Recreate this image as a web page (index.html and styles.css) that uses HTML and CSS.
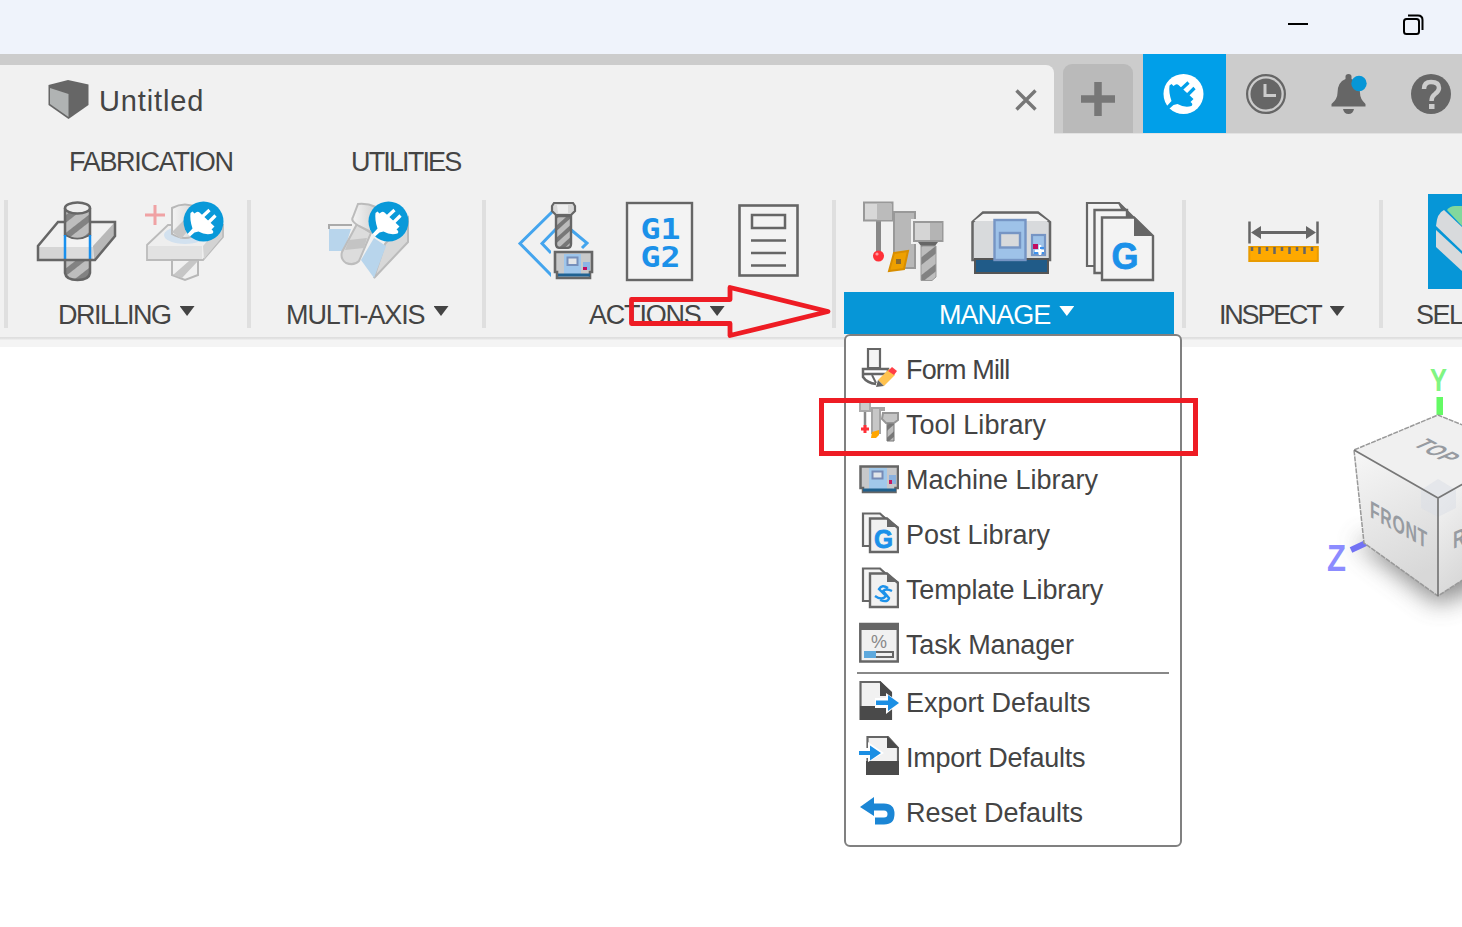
FILE: index.html
```html
<!DOCTYPE html>
<html lang="en">
<head>
<meta charset="utf-8">
<title>Untitled</title>
<link rel="stylesheet" href="styles.css">
</head>
<body>
<svg class="defs" aria-hidden="true">
  <defs>
    <linearGradient id="pale" x1="0" x2="1" y1="0" y2="0"><stop offset="0" stop-color="#f4f4f4"/><stop offset="1" stop-color="#d2d2d2"/></linearGradient>
    <linearGradient id="face" x1="0" x2=".3" y1="0" y2="1"><stop offset="0" stop-color="#f7f7f7"/><stop offset="1" stop-color="#d8d8d8"/></linearGradient>
    <pattern id="flute" width="20" height="14" patternUnits="userSpaceOnUse" patternTransform="rotate(-38)"><rect width="20" height="14" fill="#bdbdbd"/><rect width="20" height="6" fill="#828282"/></pattern>
    <pattern id="flute-s" width="12" height="9" patternUnits="userSpaceOnUse" patternTransform="rotate(-42)"><rect width="12" height="9" fill="#bcbcbc"/><rect width="12" height="4" fill="#777"/></pattern>
    <filter id="soft" x="-50%" y="-50%" width="200%" height="200%"><feGaussianBlur stdDeviation="12"/></filter>
    <g id="plug">
      <path d="M-13-8.500-11-10-9-8Q-6-11-4-9L11 5 8 8Q11 10 9 12 2 14-5 10L-9 11-13.500 15-16 12.500-11 7Q-14-2-13-8.500Z" stroke="none"/>
      <path d="M-1-5 6-11.500M5 1 12-6" fill="none" stroke-width="3.200"/>
    </g>
  </defs>
</svg>

<div class="window">
  <header class="titlebar">
    <svg class="win-btn" width="20" height="20" viewBox="0 0 20 20"><path d="M0 10H20" stroke="#000" stroke-width="2"/></svg>
    <svg class="win-btn" width="21" height="21" viewBox="0 0 21 21" fill="none" stroke="#000" stroke-width="2"><rect x="1" y="5" width="15" height="15" rx="2.500"/><path d="M5 1.500H15Q19.500 1.500 19.500 6V16"/></svg>
  </header>

  <div class="tabbar">
    <div class="doc-tab">
      <svg class="doc-icon" width="42" height="42" viewBox="47 78 42 42"><path d="M48.500 84 68 79 88.500 83.500V104L68.500 118 48.500 104Z" fill="#666"/><path d="M50 87 68.500 93V116L50 103Z" fill="#b0b3b3"/></svg>
      <span class="doc-name">Untitled</span>
      <svg width="22" height="22" viewBox="0 0 22 22"><path d="M1.500 1.500 20.500 20.500M20.500 1.500 1.500 20.500" stroke="#777" stroke-width="3.400"/></svg>
    </div>
    <div class="new-tab"><svg width="34" height="34" viewBox="0 0 34 34"><path d="M0 17H34M17 0V34" stroke="#777" stroke-width="7.500"/></svg></div>
    <div class="extension">
      <svg width="83" height="79" viewBox="1143 54 83 79"><circle cx="1183.500" cy="94" r="20" fill="#fff"/><use href="#plug" x="1182.500" y="94" fill="#009fe9" stroke="#009fe9"/></svg>
    </div>
    <svg class="status" width="236" height="79" viewBox="1226 54 236 79">
      <circle cx="1266" cy="94" r="18.900" fill="none" stroke="#666" stroke-width="2.200"/><circle cx="1266" cy="94" r="15.500" fill="#666"/><path d="M1265 84V95.500H1276" fill="none" stroke="#ccc" stroke-width="3"/>
      <path d="M1345.500 76.500Q1345.500 74 1348.500 74T1351.500 76.500V79Q1360 82 1360 93 1360 99 1365.500 104V106.500H1331.500V104Q1337.500 99 1337.500 93 1337.500 82 1345.500 79ZM1343 109H1354Q1353 114 1348.500 114T1343 109Z" fill="#666"/><circle cx="1359" cy="83.500" r="7.700" fill="#0696d7"/>
      <circle cx="1431" cy="94" r="20" fill="#666"/><path d="M1424 89Q1424 82 1431 82 1439 82 1439 88 1439 91 1435 94 1431.500 96.500 1431.500 101" fill="none" stroke="#ccc" stroke-width="4.500"/><rect x="1429" y="104" width="5.500" height="5" fill="#ccc"/>
    </svg>
  </div>

  <nav class="ribbon-tabs"><span class="tab-fabrication">FABRICATION</span><span class="tab-utilities">UTILITIES</span></nav>

  <main class="ribbon">
    <section class="group drilling">
      <div class="tools">
        <svg width="190" height="94" viewBox="36 194 190 94">
          <path d="M58 222H115V236L95 260H38V246Z" fill="#f0f0f0"/><path d="M39 247H93V259H39Z" fill="#d5d5d5"/><path d="M93 246 114 223V236L94 260Z" fill="#b8b8b8"/><path d="M58 222H115V236L95 260H38V246Z" fill="none" stroke="#666" stroke-width="2.500"/>
          <path d="M65 208V235Q77 243 90 235V208" fill="url(#flute)" stroke="#666" stroke-width="2.500"/><ellipse cx="77.500" cy="208" rx="12.500" ry="5.500" fill="#eee" stroke="#666" stroke-width="2.500"/><path d="M65 236V258H90V236Q77 243 65 236Z" fill="#f3f3f3"/><path d="M65 247H90V259H65Z" fill="#dcdcdc"/><path d="M65 235V259M90 235V259" stroke="#1890ee" stroke-width="2.500"/>
          <path d="M65 260V273Q66 280 77.500 280T90 273V260Z" fill="url(#flute)" stroke="#666" stroke-width="2.500"/>
          <path d="M155 205V225M145 215H165" stroke="#f0a2a4" stroke-width="3"/>
          <path d="M168 225H223V237L203 260H147V245Z" fill="#eee" stroke="#bbb" stroke-width="1.800"/><path d="M148 246H202V259H148Z" fill="#e2e2e2"/><path d="M203 246 222 224V237L204 259Z" fill="#d3d3d3"/><ellipse cx="185" cy="235" rx="21" ry="9" fill="#d2e1ef"/>
          <path d="M172 208Q185 201 198 208V234Q185 242 172 234Z" fill="url(#pale)" stroke="#b8b8b8" stroke-width="2"/><path d="M172 232 196 208V221L181 239Z" fill="#c6c6c6"/>
          <path d="M172 260H198V275L185 280 172 275Z" fill="#f0f0f0" stroke="#b8b8b8" stroke-width="2"/><path d="M173 275 189 261H198L182 278Z" fill="#c6c6c6"/>
          <circle cx="203.500" cy="221.500" r="20" fill="#0999d9"/><use href="#plug" x="203.500" y="221.500" fill="#fff" stroke="#fff"/>
        </svg>
      </div>
      <div class="label">DRILLING<i></i></div>
    </section>
    <section class="group multi-axis">
      <div class="tools">
        <svg width="84" height="94" viewBox="327 194 84 94">
          <path d="M329 229V225H352" fill="none" stroke="#aaa" stroke-width="2"/><path d="M329 229H351L344 251H329Z" fill="#b8d5ec"/><path d="M385 244 408 218V242L374 278Z" fill="#d8d8d8" stroke="#bbb" stroke-width="2"/><path d="M374 238 386 246 374 278 361 260Z" fill="#b8d5ec"/>
          <path d="M357 224 371 233 359 261Q354 266 346 263 340 259 342 252Z" fill="#dcdcdc" stroke="#bdbdbd" stroke-width="2"/><path d="M349 240 367 238 364 248 345 250Z" fill="#c4c4c4"/><path d="M358 204Q367 203 376 207L373 233 359 226Q350 221 353 217Z" fill="url(#pale)" stroke="#bbb" stroke-width="2"/>
          <circle cx="388.500" cy="221.500" r="20" fill="#0999d9"/><use href="#plug" x="388.500" y="221.500" fill="#fff" stroke="#fff"/>
        </svg>
      </div>
      <div class="label">MULTI-AXIS<i></i></div>
    </section>
    <section class="group actions">
      <div class="tools">
        <svg width="284" height="94" viewBox="516 194 284 94">
          <path d="M553 211 520 243.500 553 277M556 229 542 243.500 551 253M570 229 587 243 582 248" fill="none" stroke="#44a5ee" stroke-width="3"/>
          <path d="M556 216H571V244Q571 248 567 248H560Q556 248 556 244Z" fill="url(#flute-s)" stroke="#666" stroke-width="2.400"/><path d="M554 203H573L575 206V211L571 215H556L552 211V206Z" fill="#d8d8d8" stroke="#666" stroke-width="2.200"/><path d="M557 205H568V213H558Z" fill="#eee"/>
          <rect x="551" y="249" width="45" height="31" fill="#f1f1f1"/><path d="M555 252H592V272H590V278H557V272H555Z" fill="#c8c9ca" stroke="#666" stroke-width="2.600"/><rect x="564" y="254" width="17" height="20" fill="#9fc6eb"/><rect x="567.500" y="257.500" width="10" height="7.500" fill="#e4e6e8" stroke="#7790bb" stroke-width="2"/><rect x="558" y="273.500" width="32" height="3" fill="#206292"/><rect x="583" y="262" width="7" height="8" fill="#8cb4e5"/><rect x="583" y="267" width="4" height="3" fill="#c00b60"/>
          <rect x="627" y="203" width="65" height="77" fill="#f3f3f3" stroke="#666" stroke-width="2.400"/><text x="660.500" y="239" class="code" textLength="40" lengthAdjust="spacingAndGlyphs">G1</text><text x="660.500" y="266.500" class="code" textLength="40" lengthAdjust="spacingAndGlyphs">G2</text>
          <rect x="739.500" y="205.500" width="58" height="70" fill="#f3f3f3" stroke="#666" stroke-width="2.600"/><path d="M752 215H785V228H752ZM751 240.500H786M751 253H786M751 265.500H786" fill="none" stroke="#666" stroke-width="2.500"/>
        </svg>
      </div>
      <div class="label">ACTIONS<i></i></div>
    </section>
    <section class="group manage">
      <div class="tools">
        <svg width="294" height="94" viewBox="862 194 294 94">
          <path d="M876 220H881V253H876Z" fill="#888"/><rect x="864" y="202.500" width="28.500" height="18" fill="#d8d8d8" stroke="#999" stroke-width="2"/><rect x="877" y="204" width="15" height="16" fill="#bbb"/><circle cx="878.500" cy="256" r="5.500" fill="#ff3038"/><circle cx="877" cy="254" r="1.600" fill="#ff999c"/>
          <path d="M894 212H915V268H894Z" fill="#b8b8b8" stroke="#999" stroke-width="2"/><rect x="911" y="219" width="34" height="25" fill="#f1f1f1"/>
          <path d="M894 253 908 251 904 269 889 271Z" fill="#eea000" stroke="#d88e00" stroke-width="2"/><rect x="896" y="259" width="5" height="5" fill="#8a6a30"/>
          <rect x="914" y="222" width="28.500" height="19" fill="#d5d5d5" stroke="#999" stroke-width="2"/><rect x="930" y="223" width="12" height="17" fill="#b4b4b4"/><path d="M918 242H938L935 246H921Z" fill="#666"/><path d="M921 246H936V277L932 280.500H921Z" fill="url(#flute)" stroke="#999"/>
          <path d="M983 212.500H1038L1050 222V260H972.500V222Z" fill="#d8dadc" stroke="#666" stroke-width="2.500"/><path d="M983 214H1038L1048 221H974Z" fill="#f3f3f3"/><rect x="975" y="259" width="73" height="14" fill="#205b88" stroke="#555" stroke-width="2"/><rect x="994.500" y="220" width="31" height="40" fill="#9ec2e8" stroke="#7695c4" stroke-width="2.400"/><rect x="1000" y="233" width="20" height="14.500" fill="#d8dadc" stroke="#7695c4" stroke-width="2.400"/><rect x="1032" y="235" width="13" height="20" fill="#9ec2e8" stroke="#7695c4" stroke-width="2.200"/><path d="M1035 251H1044M1040 245V255" stroke="#fff" stroke-width="2.500"/><rect x="1033" y="244" width="5" height="5" fill="#c20b60"/><path d="M1040 248H1044M1034 253H1038M1042 253H1044" stroke="#3c91ee" stroke-width="2"/>
          <path d="M1087 203H1119L1138 222V266H1087Z" fill="#f3f3f3" stroke="#666" stroke-width="2.200"/><path d="M1118 203 1152 236H1134Z" fill="#666"/><path d="M1094.500 210H1127V273H1094.500Z" fill="#f3f3f3" stroke="#666" stroke-width="2.400"/><path d="M1102 217.500H1134L1153 236V280H1102Z" fill="#f3f3f3" stroke="#666" stroke-width="2.400"/><path d="M1119 202 1134 217V236H1153Z" fill="#666"/><text x="1125" y="268.500" class="gee" font-size="36" textLength="27" lengthAdjust="spacingAndGlyphs">G</text>
        </svg>
      </div>
      <div class="label">MANAGE<i></i></div>
    </section>
    <section class="group inspect">
      <div class="tools">
        <svg width="74" height="94" viewBox="1246 194 74 94"><path d="M1249.500 221.500V243.500M1317.500 221.500V243.500" stroke="#666" stroke-width="2.500"/><path d="M1256 232.500H1311" stroke="#666" stroke-width="3"/><path d="M1251 232.500 1261 226V239ZM1316 232.500 1306 226V239Z" fill="#666"/><rect x="1249.300" y="247" width="68.500" height="14" fill="#ffa900" stroke="#e99b00" stroke-width="2"/><path d="M1252 247V251M1259.500 247V254M1267 247V251M1274.500 247V254M1282 247V251M1289.500 247V254M1297 247V251M1304.500 247V254M1312 247V251" stroke="#666" stroke-width="2.500"/></svg>
      </div>
      <div class="label">INSPECT<i></i></div>
    </section>
    <section class="group select">
      <div class="tools">
        <svg width="34" height="95" viewBox="1428 194 34 95"><rect x="1428" y="194" width="34" height="95" fill="#0696d7"/><path d="M1447 210Q1450 206 1455 206H1462V226Z" fill="#82d89c"/><path d="M1436 226Q1437 213 1444 210L1462 227V251Z" fill="#d8dadc"/><path d="M1436 230 1462 254V271L1436 247Z" fill="#d8dadc"/></svg>
      </div>
      <div class="label">SEL</div>
    </section>
  </main>

  <section class="canvas">
    <svg width="150" height="290" viewBox="1312 355 150 290">
      <path d="M1356 542 1438 604 1520 570V540H1362Z" fill="#666" opacity=".75" filter="url(#soft)"/>
      <text x="1430" y="391" font-size="31" fill="#80f582" class="axis" textLength="17" lengthAdjust="spacingAndGlyphs">Y</text><rect x="1436.500" y="397" width="6.500" height="18" fill="#64fa64"/>
      <text x="1327" y="571" font-size="36" fill="#8c8cff" class="axis" textLength="19" lengthAdjust="spacingAndGlyphs">Z</text><path d="M1351 550 1366 543" stroke="#7272f4" stroke-width="6"/>
      <path d="M1354 450 1438 415 1470 428V484L1438 498Z" fill="#f0f0f0"/><path d="M1354 450 1438 498V596L1364 543Z" fill="url(#face)"/><path d="M1438 498 1472 479V574L1438 596Z" fill="url(#face)"/>
      <path d="M1438 479 1456 490V508L1438 517 1421 508V490Z" fill="#d9dee5" opacity=".5"/>
      <path d="M1470 428 1438 415 1354 450 1364 543 1438 596 1472 574" fill="none" stroke="#999" stroke-width="1.500" stroke-dasharray="5 1"/><path d="M1354 450 1438 498 1472 479M1438 498V596" fill="none" stroke="#777" stroke-width="1.700"/>
      <g class="cube-text"><text transform="matrix(.66 .37 0 1 1370 517)" font-size="24" letter-spacing="1">FRONT</text><text transform="matrix(.8 .43 -1.150 .5 1412 445)" font-size="20" letter-spacing="1">TOP</text><text transform="matrix(.7 -.3 0 1 1453 549)" font-size="24">R</text></g>
    </svg>
  </section>

  <div class="menu">
    <div class="item"><svg width="40" height="44" viewBox="859 345 40 44"><path d="M868 348H880V367H868Z" fill="#f4f4f4" stroke="#666" stroke-width="2.200"/><path d="M863 368H888V373H863ZM863 373V376Q867 382 876 383" fill="none" stroke="#666" stroke-width="2.500"/><path d="M872 374 876 382" stroke="#666" stroke-width="2"/><path d="M878 379 889 368 895 374 884 385Z" fill="#ffc24e"/><path d="M888 370 892 366 897 370 894 374Z" fill="#ff3e46"/><path d="M876 386 878 379 884 385Z" fill="#666"/></svg><span class="t-form">Form Mill</span></div>
    <div class="item"><svg width="40" height="44" viewBox="859 400 40 44"><path d="M865 410V427" stroke="#888" stroke-width="2.500"/><rect x="860" y="401" width="10" height="9" fill="#ccc" stroke="#aaa" stroke-width="2"/><path d="M861 428H869M865 424V432" stroke="#ff3038" stroke-width="3"/><path d="M872 407H884V409H880V432H872Z" fill="#c7c7c7" stroke="#a4a4a4" stroke-width="2"/><path d="M872 431 879 429V434L876 437H871Z" fill="#ffa600"/><path d="M883 412H898V419L894 422H886L882 418Z" fill="#c5c5c5" stroke="#969696" stroke-width="2"/><path d="M887 423H894V440H887Z" fill="url(#flute-s)" stroke="#777"/></svg><span class="t-tool">Tool Library</span></div>
    <div class="item"><svg width="40" height="44" viewBox="859 455 40 44"><path d="M860.500 465.500H898V487H895.500V491H863V487H860.500Z" fill="#c7c8ca" stroke="#666" stroke-width="2.500"/><rect x="869" y="467" width="18" height="21" fill="#a1c8ea"/><rect x="872.500" y="470.500" width="10" height="7" fill="#e2e5e9" stroke="#778bb5" stroke-width="2"/><path d="M863 489H896" stroke="#20608d" stroke-width="3"/><rect x="889" y="474" width="7" height="9" fill="#8ab1df"/><rect x="889" y="479" width="3" height="4" fill="#c41a60"/></svg><span class="t-machine">Machine Library</span></div>
    <div class="item"><svg width="40" height="44" viewBox="859 510 40 44"><path d="M863 512.500H880L888 520V545H863Z" fill="#f4f4f4" stroke="#666" stroke-width="2.200"/><path d="M870 517.500H887L898 527V551H870Z" fill="#f1f1f1" stroke="#666" stroke-width="2.400"/><path d="M879 512 899 526H887V517Z" fill="#666"/><text x="883.500" y="547" class="gee" font-size="26" textLength="19" lengthAdjust="spacingAndGlyphs">G</text></svg><span class="t-post">Post Library</span></div>
    <div class="item"><svg width="40" height="44" viewBox="859 565 40 44"><path d="M863 567.500H880L888 575V600H863Z" fill="#f4f4f4" stroke="#666" stroke-width="2.200"/><path d="M870 572.500H887L898 582V606H870Z" fill="#f1f1f1" stroke="#666" stroke-width="2.400"/><path d="M879 567 899 581H887V572Z" fill="#666"/><path d="M888 587Q882 583 879 588L886 595Q882 600 875 595M892 590Q886 587 883 590L889 597Q888 602 880 599" fill="none" stroke="#1d92ea" stroke-width="2.400"/></svg><span class="t-template">Template Library</span></div>
    <div class="item"><svg width="40" height="44" viewBox="859 620 40 44"><rect x="860.300" y="623" width="37.500" height="37.500" fill="#f1f1f1" stroke="#666" stroke-width="2.500"/><rect x="860" y="622" width="38" height="7" fill="#666"/><text x="879" y="647" class="percent" textLength="16" lengthAdjust="spacingAndGlyphs">%</text><rect x="865" y="651" width="28" height="5" fill="#f1f1f1" stroke="#666" stroke-width="2"/><rect x="864" y="650" width="12" height="7" fill="#5ea9dd"/></svg><span class="t-task">Task Manager</span></div>
    <hr>
    <div class="item"><svg width="40" height="44" viewBox="859 678 40 44"><path d="M860.500 681H880L891 692V718H860.500Z" fill="#f1f1f1" stroke="#666" stroke-width="2.200"/><path d="M880 680 892 691V695H880ZM860 705H892V719H860Z" fill="#4a4a4a"/><path d="M875 697H886V692L900 702 886 713V707H875Z" fill="#fff"/><path d="M876 699.500H888V694L899 702 888 710V704H876Z" fill="#1b8fe4"/></svg><span class="t-export">Export Defaults</span></div>
    <div class="item"><svg width="40" height="44" viewBox="859 733 40 44"><path d="M867.500 741V736H888L898 747V773H867.500Z" fill="#f1f1f1" stroke="#666" stroke-width="2.200"/><path d="M887 735 899 747H887ZM866 760H899V774H866Z" fill="#4a4a4a"/><path d="M859 747H868V741L884 752 868 761V757H859Z" fill="#fff"/><path d="M870 744.500 881 752 870 759.500V754H859V750H870Z" fill="#1b8fe4"/></svg><span class="t-import">Import Defaults</span></div>
    <div class="item"><svg width="40" height="44" viewBox="859 788 40 44"><path d="M872 806H884Q891 806 891 813T884 820H875" fill="none" stroke="#1b86d5" stroke-width="7"/><path d="M860 806 874 796V815Z" fill="#1b86d5"/></svg><span class="t-reset">Reset Defaults</span></div>
  </div>

  <svg class="callout" width="206" height="56" viewBox="627 284 206 56"><path d="M631.500 299.500H730V287.500L828 311.500 730 335.500V323.500H631.500Z" fill="none" stroke="#ee1c24" stroke-width="4.800" stroke-linejoin="round"/></svg>
  <div class="highlight"></div>
</div>
</body>
</html>
```
FILE: styles.css
```css
* { box-sizing: border-box; }
body { margin: 0; background: #fff; color: #444; font: 27px/32px "Liberation Sans", Arial, sans-serif; overflow: hidden; }
svg { display: block; flex: none; }
.defs { position: absolute; width: 0; height: 0; }
.window { position: relative; width: 1462px; height: 927px; overflow: hidden; display: flex; flex-direction: column; background: #fff; }

.titlebar { height: 54px; background: #eff3fb; display: flex; justify-content: flex-end; align-items: center; gap: 95px; padding: 0 38px 6px 0; }

.tabbar { height: 80px; background: #ccc; display: flex; align-items: flex-end; border-bottom: 1px solid #e2e2e2; }
.doc-tab { width: 1054px; height: 69px; margin-bottom: -1px; background: #f1f1f1; border-radius: 0 8px 0 0; display: flex; align-items: center; padding: 0 17px 0 47px; }
.doc-name { flex: 1; font-size: 29px; letter-spacing: .85px; padding: 2px 0 0 10px; }
.new-tab { width: 70px; height: 69px; margin-left: 9px; background: #bababa; border-radius: 9px 9px 0 0; display: grid; place-items: center; }
.extension { width: 83px; height: 79px; margin-left: 10px; background: #009fe9; }

.ribbon-tabs { height: 60px; background: #f1f1f1; padding: 12px 0 0 69px; display: flex; white-space: nowrap; }
.tab-fabrication { width: 282px; letter-spacing: -1.3px; }
.tab-utilities { letter-spacing: -1.85px; }

.ribbon { height: 153px; background: linear-gradient(#f1f1f1 143px, #ddd 143px, #e4e4e4 145px, #f4f4f4 146px); display: flex; }
.group { height: 153px; padding-left: 4px; background: linear-gradient(#dfdfdf, #dfdfdf) 0 6px / 4px 128px no-repeat; overflow: hidden; flex: none; }
.tools { height: 98px; display: flex; }
.label { height: 42px; display: flex; align-items: center; white-space: nowrap; padding-top: 3px; }
.label i { width: 15px; height: 10px; margin: -7px 0 0 9px; background: currentColor; clip-path: polygon(0 0, 100% 0, 50% 100%); }
.drilling { width: 243px; margin-left: 4px; }
.drilling .tools { padding-left: 28px; }
.drilling .label { padding-left: 50px; letter-spacing: -1.5px; }
.multi-axis { width: 235px; }
.multi-axis .tools { padding-left: 76px; }
.multi-axis .label { padding-left: 35px; letter-spacing: -1.1px; }
.actions { width: 350px; }
.actions .tools { padding-left: 30px; }
.actions .label { padding-left: 103px; letter-spacing: -1.2px; }
.manage { width: 350px; }
.manage .tools { padding-left: 26px; }
.manage .label { width: 330px; margin-left: 8px; padding-left: 95px; color: #fff; background: #0696d7; letter-spacing: -.95px; }
.inspect { width: 197px; }
.inspect .tools { padding-left: 60px; }
.inspect .label { padding-left: 33px; letter-spacing: -2.2px; }
.select { width: 83px; }
.select .tools { padding-left: 45px; }
.select .label { padding-left: 33px; letter-spacing: -1.5px; }
.code, .gee { fill: #1b91e9; font-family: "DejaVu Sans Mono", monospace; font-weight: 700; text-anchor: middle; }
.code { font-size: 29px; }
.gee { font-family: "Liberation Sans", sans-serif; stroke: #1b91e9; stroke-width: .8px; }
.percent { fill: #888; font-size: 19px; text-anchor: middle; }

.canvas { flex: 1; display: flex; justify-content: flex-end; padding-top: 8px; }
.axis { font-family: "Liberation Sans", sans-serif; }
.axis { stroke: currentColor; stroke-width: 0; font-weight: 700; }
.cube-text { fill: #979ba1; font-weight: 700; }

.menu { position: absolute; left: 844px; top: 334px; width: 338px; height: 513px; padding: 6px 11px 0 11px; background: #fff; border: 2.500px solid #808080; border-radius: 6px; }
.item { height: 55px; display: flex; align-items: center; gap: 7px; white-space: nowrap; padding: 0 0 3px 2px; }
.item span { padding-top: 3px; }
.menu hr { height: 2px; margin: 0 0 1px; border: 0; background: #888; }
.t-form { letter-spacing: -.85px; }
.t-tool { letter-spacing: .05px; }
.t-machine { letter-spacing: 0; }
.t-post { letter-spacing: 0; }
.t-template { letter-spacing: -.15px; }
.t-task { letter-spacing: -.15px; }
.t-export { letter-spacing: 0; }
.t-import { letter-spacing: -.25px; }
.t-reset { letter-spacing: 0; }

.callout { position: absolute; left: 627px; top: 284px; }
.highlight { position: absolute; left: 819px; top: 398px; width: 379px; height: 58px; border: 5px solid #ee1c24; }
```
